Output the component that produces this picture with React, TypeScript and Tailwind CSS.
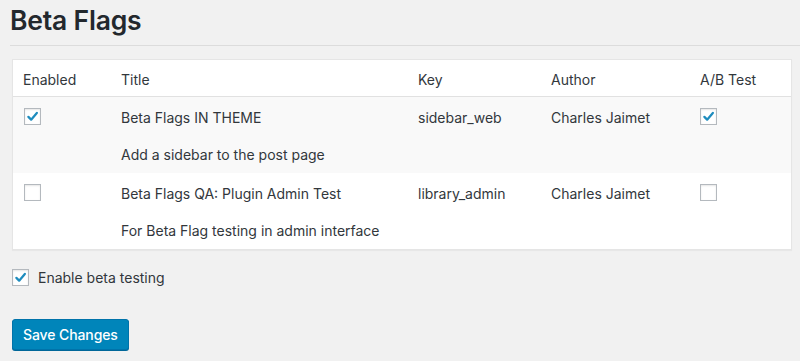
import React from 'react';

type Flag = {
  title: string;
  desc: string;
  key: string;
  author: string;
  enabled: boolean;
  ab: boolean;
};

const flags: Flag[] = [
  { title: 'Beta Flags IN THEME', desc: 'Add a sidebar to the post page', key: 'sidebar_web', author: 'Charles Jaimet', enabled: true, ab: true },
  { title: 'Beta Flags QA: Plugin Admin Test', desc: 'For Beta Flag testing in admin interface', key: 'library_admin', author: 'Charles Jaimet', enabled: false, ab: false },
];

const Checkbox = ({ checked }: { checked: boolean }) => (
  <span className="w-[17px] h-[17px] bg-white border border-[#b4b9be] shadow-[inset_0_1px_2px_rgba(0,0,0,0.1)] flex items-center justify-center">
    {checked && (
      <svg viewBox="0 0 20 20" className="w-[17px] h-[17px]">
        <path d="M4.5 10.5 L8.2 14.2 L15.8 5.2" fill="none" stroke="#1e8cbe" strokeWidth="3" strokeLinecap="round" strokeLinejoin="round" />
      </svg>
    )}
  </span>
);

const cols = 'grid grid-cols-[98px_297px_133px_149px_1fr]';

export default function App() {
  return (
    <div className="min-h-[361px] bg-[#f1f1f1] text-[#32373c] font-['Inter','Liberation_Sans',sans-serif] text-[14px] overflow-hidden">
      <div className="pl-[10px]">
        <h1 className="text-[26.5px] leading-[38px] pt-[1px] font-semibold text-[#23282d] tracking-[-0.2px]">Beta Flags</h1>
        <div className="mt-[6px] border-t border-[#dcdcdc]" />
      </div>

      <div className="mx-[12px] mt-[13px] w-[780px] bg-white border border-[#e5e5e5] shadow-[0_1px_1px_rgba(0,0,0,0.04)]">
        <div className={`${cols} h-[37px] pt-[2px] items-center border-b border-[#e1e1e1] text-[#32373c]`}>
          <div className="pl-[10px]">Enabled</div>
          <div className="pl-[10px]">Title</div>
          <div className="pl-[10px]">Key</div>
          <div className="pl-[10px]">Author</div>
          <div className="pl-[10px]">A/B Test</div>
        </div>
        {flags.map((f, i) => (
          <div key={f.key} className={`${cols} h-[76px] ${i % 2 === 0 ? 'bg-[#f9f9f9]' : 'bg-white'}`}>
            <div className="pl-[11px] pt-[11px]">
              <Checkbox checked={f.enabled} />
            </div>
            <div className="pl-[10px] pt-[12px]">
              <div className="leading-[18px]">{f.title}</div>
              <div className="leading-[18px] mt-[19px]">{f.desc}</div>
            </div>
            <div className="pl-[10px] pt-[12px] leading-[18px]">{f.key}</div>
            <div className="pl-[10px] pt-[12px] leading-[18px]">{f.author}</div>
            <div className="pl-[10px] pt-[11px]">
              <Checkbox checked={f.ab} />
            </div>
          </div>
        ))}
      </div>

      <label className="flex items-center gap-[9px] ml-[12px] mt-[17px]">
        <Checkbox checked />
        <span>Enable beta testing</span>
      </label>

      <button className="ml-[12px] mt-[31px] h-[31px] px-[10px] rounded-[3px] bg-[#0085ba] border border-[#0073aa] shadow-[0_1px_0_#006799] text-white text-[14px] font-medium tracking-[-0.1px]">
        Save Changes
      </button>
    </div>
  );
}
